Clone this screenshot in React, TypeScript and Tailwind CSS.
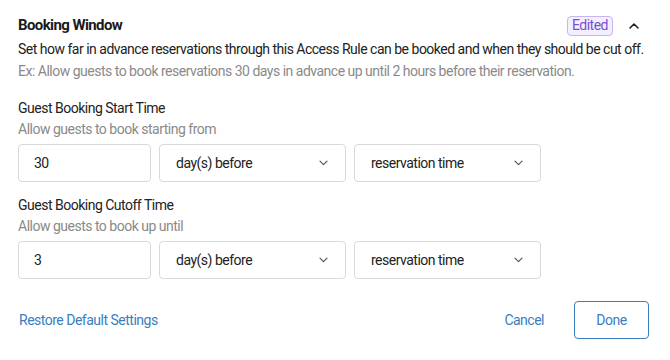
import React from "react";

const Chevron = () => (
  <svg width="9" height="6" viewBox="0 0 9 6" fill="none">
    <path d="M1 1.2l3.5 3.5 3.5-3.5" stroke="#555" strokeWidth="1.2" strokeLinecap="round" strokeLinejoin="round" />
  </svg>
);

const Select = ({ label }: { label: string }) => (
  <div className="flex h-[38px] w-[187px] items-center justify-between rounded-[4px] border border-[#d9d9d9] pl-[16px] pr-[17px] text-[14px] tracking-[-0.5px] text-[#222]">
    <span>{label}</span>
    <Chevron />
  </div>
);

const Row = ({ value }: { value: string }) => (
  <div className="flex gap-[8px]">
    <div className="flex h-[38px] w-[133px] items-center rounded-[4px] border border-[#d9d9d9] pl-[15px] text-[14px] tracking-[-0.5px] text-[#222]">
      {value}
    </div>
    <Select label="day(s) before" />
    <Select label="reservation time" />
  </div>
);

export default function App() {
  return (
    <div
      className="h-[360px] w-[670px] bg-white pl-[18px] pr-[20px] pt-[15px] tracking-[-0.5px]"
      style={{ fontFamily: "Roboto, 'Liberation Sans', sans-serif" }}
    >
      <div className="flex h-[21px] items-center justify-between">
        <div className="text-[15px] font-bold tracking-[-0.6px] text-[#1a1a1a]">Booking Window</div>
        <div className="flex items-center gap-[16px]">
          <div className="flex h-[20px] items-center rounded-[4px] border border-[#c9b4f2] bg-[#f4effd] px-[4px] text-[14px] text-[#7a4fd6]">
            Edited
          </div>
          <svg width="10" height="6" viewBox="0 0 10 6" fill="none" className="mr-[11px]">
            <path d="M1 5l4-4 4 4" stroke="#222" strokeWidth="1.6" strokeLinecap="round" strokeLinejoin="round" />
          </svg>
        </div>
      </div>
      <div className="mt-[2px] whitespace-nowrap text-[14px] leading-[22px] text-[#222]">
        Set how far in advance reservations through this Access Rule can be booked and when they should be cut off.
      </div>
      <div className="whitespace-nowrap text-[14px] leading-[22px] text-[#8a8a8a]">
        Ex: Allow guests to book reservations 30 days in advance up until 2 hours before their reservation.
      </div>

      <div className="mt-[16px] text-[14px] leading-[20px] text-[#222]">Guest Booking Start Time</div>
      <div className="text-[14px] leading-[22px] text-[#8a8a8a]">Allow guests to book starting from</div>
      <div className="mt-[4px]">
        <Row value="30" />
      </div>

      <div className="mt-[13px] text-[14px] leading-[20px] text-[#222]">Guest Booking Cutoff Time</div>
      <div className="text-[14px] leading-[22px] text-[#8a8a8a]">Allow guests to book up until</div>
      <div className="mt-[4px]">
        <Row value="3" />
      </div>

      <div className="mt-[22px] flex items-center justify-between pr-[1px]">
        <div className="pl-[1px] text-[14px] text-[#3b7dbf]">Restore Default Settings</div>
        <div className="flex items-center gap-[30px]">
          <div className="text-[14px] text-[#3b7dbf]">Cancel</div>
          <div className="flex h-[38px] w-[75px] items-center justify-center rounded-[4px] border border-[#3b7dbf] text-[14px] text-[#3b7dbf]">
            Done
          </div>
        </div>
      </div>
    </div>
  );
}
